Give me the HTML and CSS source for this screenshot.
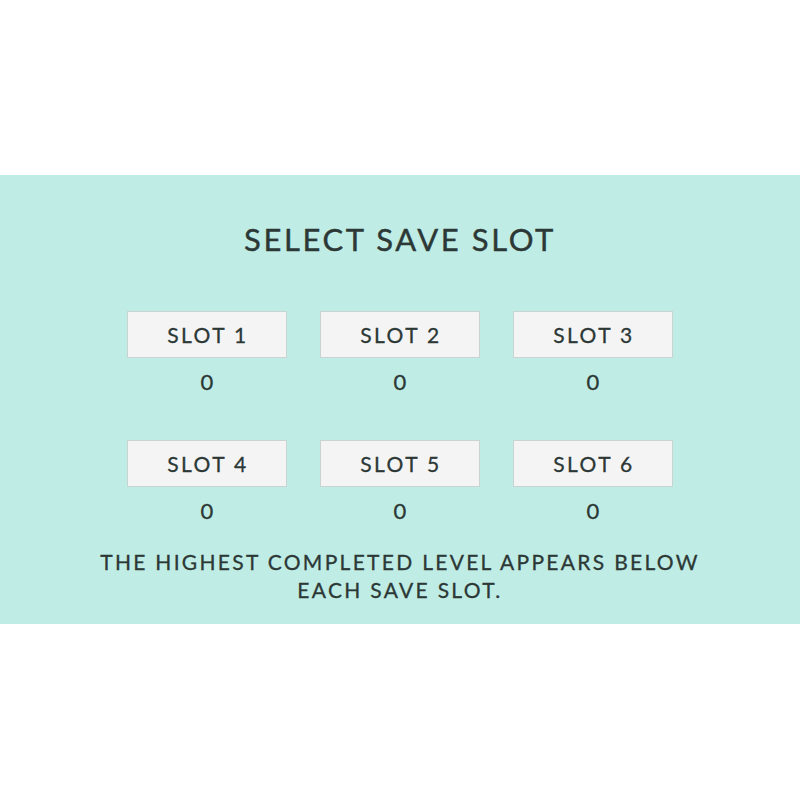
FILE: index.html
```html
<!DOCTYPE html>
<html>
<head>
<meta charset="utf-8">
<link rel="stylesheet" href="styles.css">
</head>
<body>
<div class="page">
  <section class="panel">
    <h1 class="title">SELECT SAVE SLOT</h1>
    <div class="slots">
      <div class="slot"><button class="slot-btn">SLOT 1</button><div class="level">0</div></div>
      <div class="slot"><button class="slot-btn">SLOT 2</button><div class="level">0</div></div>
      <div class="slot"><button class="slot-btn">SLOT 3</button><div class="level">0</div></div>
      <div class="slot"><button class="slot-btn">SLOT 4</button><div class="level">0</div></div>
      <div class="slot"><button class="slot-btn">SLOT 5</button><div class="level">0</div></div>
      <div class="slot"><button class="slot-btn">SLOT 6</button><div class="level">0</div></div>
    </div>
    <p class="note">THE HIGHEST COMPLETED LEVEL APPEARS BELOW<br>EACH SAVE SLOT.</p>
  </section>
</div>
</body>
</html>
```
FILE: styles.css
```css
html, body {
  margin: 0;
  padding: 0;
  background: #ffffff;
}
.page {
  width: 800px;
  height: 800px;
  padding-top: 175px;
  box-sizing: border-box;
}
.panel {
  background: #bfece4;
  height: 449px;
  box-sizing: border-box;
  padding-top: 39px;
  display: flex;
  flex-direction: column;
  align-items: center;
  font-family: "Lato", "Open Sans", sans-serif;
  color: #2c3836;
}
.title {
  margin: 0;
  font-size: 31px;
  font-weight: 400;
  letter-spacing: 2.6px;
  line-height: 50px;
  height: 50px;
  -webkit-text-stroke: 0.4px #2c3836;
}
.slots {
  margin-top: 47px;
  display: grid;
  grid-template-columns: repeat(3, 160px);
  column-gap: 33px;
  row-gap: 47px;
}
.slot {
  display: flex;
  flex-direction: column;
  align-items: center;
}
.slot-btn {
  width: 160px;
  height: 47px;
  box-sizing: border-box;
  background: #f4f4f4;
  border: 1px solid #c9d3d1;
  font-family: "Lato", "Open Sans", sans-serif;
  font-size: 21px;
  letter-spacing: 2.4px;
  color: #2c3836;
  padding: 0 0 0 2px;
  -webkit-text-stroke: 0.3px #2c3836;
}
.level {
  margin-top: 13px;
  font-size: 22px;
  line-height: 22px;
  height: 22px;
  -webkit-text-stroke: 0.3px #2c3836;
}
.note {
  margin: 26px 0 0;
  text-align: center;
  font-size: 21px;
  letter-spacing: 2.3px;
  line-height: 28px;
  -webkit-text-stroke: 0.3px #2c3836;
}
```
